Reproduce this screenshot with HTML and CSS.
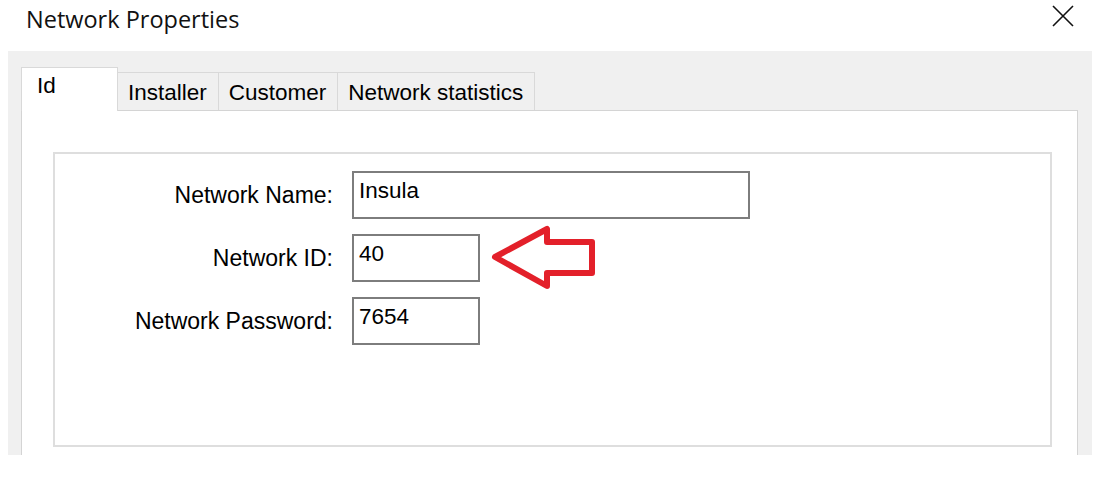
FILE: index.html
```html
<!DOCTYPE html>
<html>
<head>
<meta charset="utf-8">
<link rel="stylesheet" href="styles.css">
</head>
<body>
<div class="titlebar">
  <span class="title">Network Properties</span>
  <svg class="close" width="22" height="22" viewBox="0 0 22 22"><path d="M1 1 L21 21 M21 1 L1 21" stroke="#111" stroke-width="1.6" fill="none"/></svg>
</div>
<div class="window">
  <div class="tabs">
    <div class="tab active">Id</div>
    <div class="tab">Installer</div>
    <div class="tab">Customer</div>
    <div class="tab">Network statistics</div>
  </div>
  <div class="page">
    <div class="group">
      <div class="form">
        <div class="label">Network Name:</div>
        <div class="field"><div class="input wide">Insula</div></div>
        <div class="label">Network ID:</div>
        <div class="field">
          <div class="input">40</div>
          <svg class="arrow" width="112" height="68" viewBox="0 0 112 68"><path d="M7 34 L59 6 L59 19 L104 19 L104 50 L59 50 L59 63 Z" fill="none" stroke="#e3202a" stroke-width="6" stroke-linejoin="round"/></svg>
        </div>
        <div class="label">Network Password:</div>
        <div class="field"><div class="input">7654</div></div>
      </div>
    </div>
  </div>
</div>
</body>
</html>
```
FILE: styles.css
```css
html, body {
  margin: 0;
  padding: 0;
  background: #ffffff;
}
body {
  width: 1110px;
  height: 485px;
  overflow: hidden;
  font-family: "Liberation Sans", Arial, sans-serif;
  color: #000;
}
.titlebar {
  height: 51px;
  display: flex;
  justify-content: space-between;
  align-items: flex-start;
  padding: 0 36px 0 26px;
  box-sizing: border-box;
}
.title {
  font-family: "Open Sans", "Noto Sans", sans-serif;
  font-size: 23.5px;
  line-height: 31px;
  margin-top: 4px;
  color: #111;
}
.close {
  margin-top: 5px;
}
.window {
  margin: 0 18px 0 8px;
  height: 404px;
  background: #f0f0f0;
  padding: 16px 14px 0 13px;
  box-sizing: border-box;
  overflow: hidden;
  display: flex;
  flex-direction: column;
}
.tabs {
  display: flex;
  align-items: flex-end;
  height: 43px;
  flex: none;
}
.tab {
  height: 38px;
  box-sizing: border-box;
  border: 1px solid #d9d9d9;
  border-bottom: none;
  background: #f0f0f0;
  font-size: 22.5px;
  line-height: 26px;
  padding: 7px 11px 0 10px;
  margin-left: -1px;
  white-space: nowrap;
}
.tab.active {
  position: relative;
  z-index: 1;
  height: 44px;
  margin-bottom: -1px;
  margin-left: 0;
  width: 97px;
  background: #ffffff;
  padding: 5px 0 0 15px;
}
.page {
  flex: 1;
  background: #ffffff;
  border: 1px solid #d4d4d4;
  border-bottom: none;
  padding: 41px 25px 0 31px;
}
.group {
  height: 295px;
  box-sizing: border-box;
  border: 2px solid #dedede;
  padding-top: 17px;
}
.form {
  display: grid;
  grid-template-columns: 278px 1fr;
  grid-auto-rows: 48px;
  column-gap: 19px;
  row-gap: 15px;
}
.label {
  font-size: 23px;
  text-align: right;
  align-self: center;
  white-space: nowrap;
}
.field {
  display: flex;
  align-items: center;
  gap: 8px;
}
.input {
  width: 128px;
  height: 48px;
  box-sizing: border-box;
  border: 2px solid #7d7d7d;
  padding: 5px 4px 0 5px;
  font-size: 22.5px;
  line-height: 26px;
  background: #fff;
}
.input.wide {
  width: 398px;
}
.arrow {
  margin-top: -2px;
}
```
